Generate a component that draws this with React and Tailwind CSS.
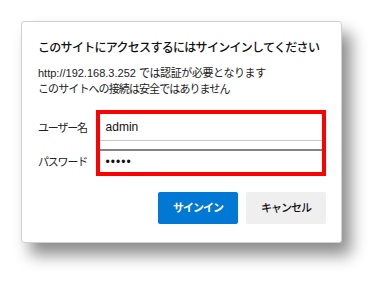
import React from "react";

const font = { fontFamily: '"Liberation Sans", "Noto Sans CJK JP", sans-serif' };

export default function App() {
  return (
    <div className="w-[385px] h-[286px] bg-white pt-[21px] pl-[21px]" style={font}>
      {/* Dialog */}
      <div className="w-[321px] h-[222px] bg-white border border-[#cfcfcf] rounded-[3px] shadow-[9px_12px_16px_rgba(0,0,0,0.45)] pt-[18px] pl-[16px] pr-[15px] flex flex-col">
        <h1 className="text-[12px] leading-[16px] tracking-[-0.7px] text-[#111] font-medium">
          このサイトにアクセスするにはサインインしてください
        </h1>

        <div className="mt-[9px] text-[11px] leading-[16px] text-[#222]">
          <p>
            http://192.168.3.252 <span className="tracking-[-0.4px]">では認証が必要となります</span>
          </p>
          <p className="tracking-[-0.9px]">このサイトへの接続は安全ではありません</p>
        </div>

        {/* Form */}
        <div className="mt-[13px] flex">
          <div className="w-[58px] pt-[10px] text-[11px] leading-[16px] tracking-[-1.2px] text-[#222]">
            <p>ユーザー名</p>
            <p className="mt-[18px]">パスワード</p>
          </div>
          <div className="w-[232px] border-4 border-[#ff0000] flex flex-col">
            <div className="h-[27px] border-b border-[#c8c8c8] pl-[6px] flex items-center text-[12px] text-[#111]">
              admin
            </div>
            <div className="h-[8px]" />
            <div className="h-[23px] border-t-2 border-[#858585] pl-[6px] flex items-center text-[12px] tracking-[1px] text-[#111]">
              •••••
            </div>
          </div>
        </div>

        {/* Buttons */}
        <div className="mt-[16px] flex justify-end gap-[8px]">
          <button className="w-[80px] h-[32px] rounded-[2px] bg-[#0078d4] text-white text-[11px] font-bold tracking-[-1px]">
            サインイン
          </button>
          <button className="w-[80px] h-[32px] rounded-[2px] bg-[#efefef] text-[#111] text-[11px] font-medium tracking-[-1px]">
            キャンセル
          </button>
        </div>
      </div>
    </div>
  );
}
